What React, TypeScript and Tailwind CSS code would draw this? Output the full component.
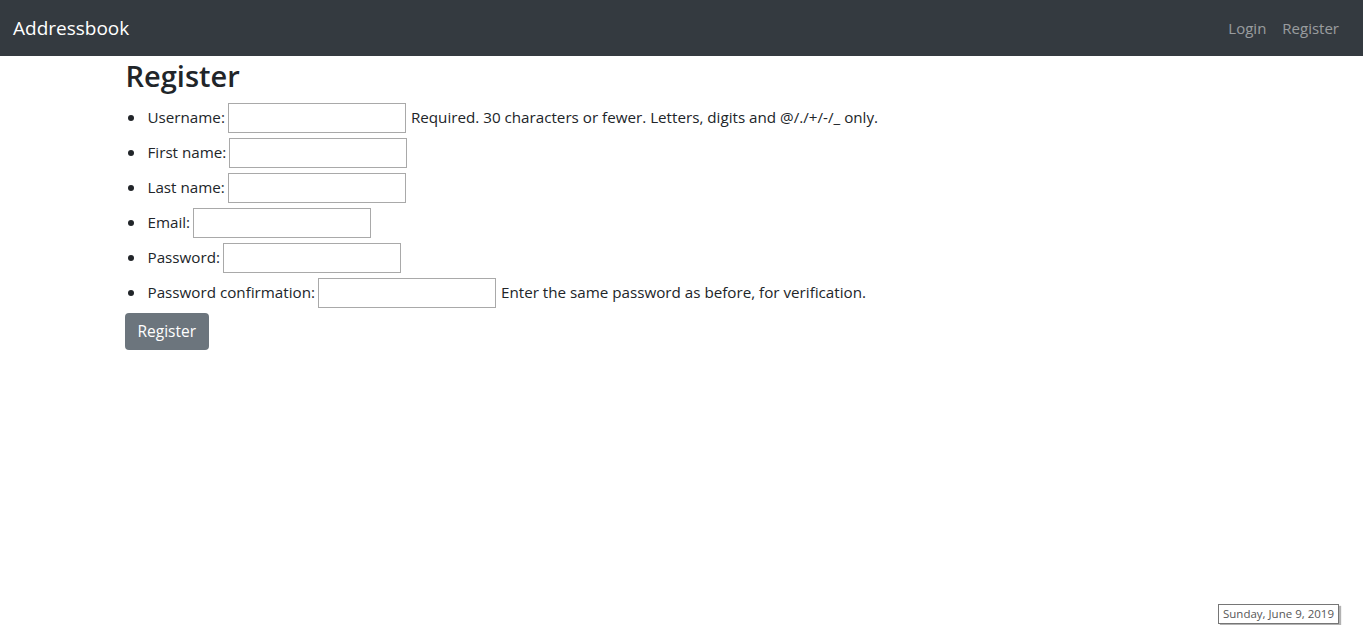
const fields = [
  { label: 'Username:', help: 'Required. 30 characters or fewer. Letters, digits and @/./+/-/_ only.' },
  { label: 'First name:' },
  { label: 'Last name:' },
  { label: 'Email:' },
  { label: 'Password:', type: 'password' },
  { label: 'Password confirmation:', type: 'password', help: 'Enter the same password as before, for verification.' },
];

export default function App() {
  return (
    <div className="relative h-[625px] overflow-hidden bg-white text-[#212529] font-['Segoe_UI','Open_Sans',sans-serif]">
      {/* Navbar */}
      <nav className="flex h-[56px] items-center justify-between bg-[#343a40] pl-[13px] pr-[24px]">
        <a className="text-[19px] text-white">Addressbook</a>
        <div className="flex gap-[16px] text-[15px] text-white/50">
          <a>Login</a>
          <a>Register</a>
        </div>
      </nav>

      {/* Content */}
      <main className="mx-auto max-w-[1140px] px-[14px]">
        <h2 className="mb-[6px] pt-[1px] text-[29px] font-semibold leading-[37px]">Register</h2>
        <form>
          <ul>
            {fields.map((f) => (
              <li key={f.label} className="flex h-[35px] items-center text-[15.2px]">
                <span className="ml-[2px] mr-[14px] h-[6px] w-[6px] rounded-full bg-[#212529]" />
                <label>{f.label}</label>
                <input
                  type={f.type ?? 'text'}
                  className="ml-[3px] h-[30px] w-[178px] border border-[#a9a9a9] bg-white px-[2px] outline-none"
                />
                {f.help && <span className="ml-[5px]">{f.help}</span>}
              </li>
            ))}
          </ul>
          <button
            type="submit"
            className="-ml-[1px] mt-[3px] h-[37px] rounded-[4px] bg-[#6c757d] px-[13px] text-[15.5px] text-white"
          >
            Register
          </button>
        </form>
      </main>

      {/* System date tooltip */}
      <div className="absolute left-[1218px] top-[604px] w-[121px] border border-[#767676] bg-white text-center text-[11.5px] leading-[18px] text-[#575757] shadow-[2px_2px_1px_rgba(0,0,0,0.3)]">
        Sunday, June 9, 2019
      </div>
    </div>
  );
}
